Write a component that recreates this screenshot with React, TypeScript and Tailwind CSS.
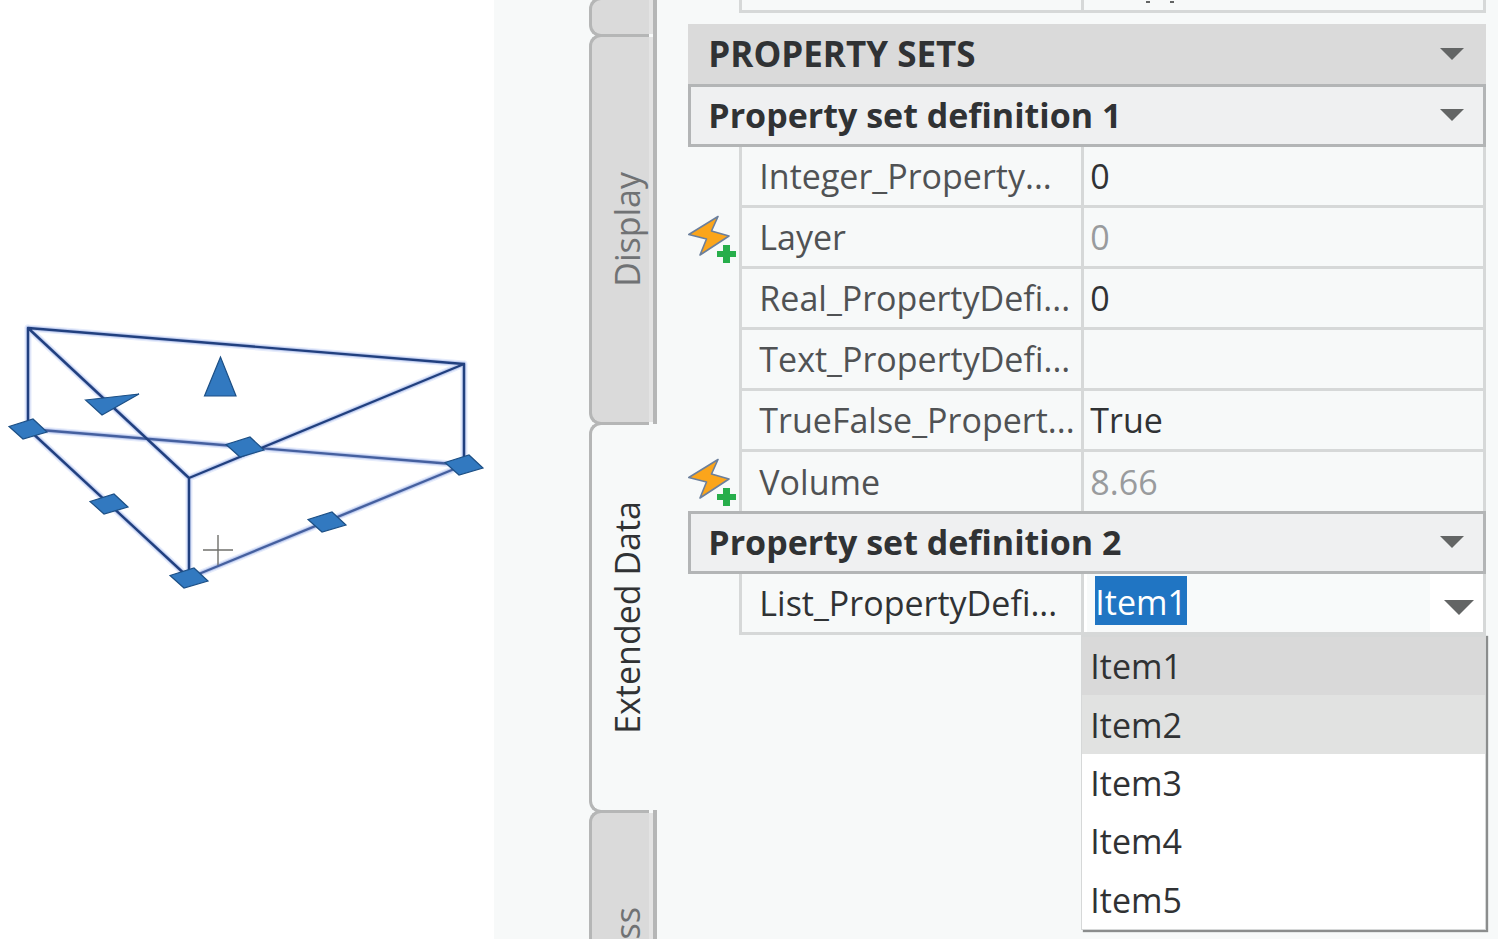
import React from 'react';

type Row = {
    name: string;
    value: string;
    auto?: boolean;
}

const firstSet: Row[] = [
    { name: 'Integer_Property...', value: '0' },
    { name: 'Layer', value: '0', auto: true },
    { name: 'Real_PropertyDefi...', value: '0' },
    { name: 'Text_PropertyDefi...', value: '' },
    { name: 'TrueFalse_Propert...', value: 'True' },
    { name: 'Volume', value: '8.66', auto: true },
]

const listItems = ['Item1', 'Item2', 'Item3', 'Item4', 'Item5']

const edges = 'M28 328L464 364M28 328L189 478L464 364M28 328V429M464 364V465M189 478V578M28 429L189 578'
const baseEdges = 'M28 429L464 465L189 578'
const grips = [[28, 429], [109, 504], [189, 578], [327, 522], [464, 465], [245, 447]]

function Arrow({ large }: { large?: boolean }) {
    return (
        <svg viewBox='0 0 24 12' className={large ? 'w-[30px] h-[15px]' : 'w-6 h-3'} aria-hidden='true'>
            <path d='M0 0H24L12 12Z' fill='#636565' />
        </svg>
    )
}

function AutoIcon() {
    return (
        <svg viewBox='0 0 48 48' className='block w-12 h-12' aria-hidden='true'>
            <path d='M30 1.5L0.8 19.5L18.5 24L12 40L41 21L23.5 16Z' fill='#fba51b' stroke='#6b7f9c' strokeWidth='1.6' strokeLinejoin='round' />
            <path d='M35 30H42V36H48V42H42V48H35V42H29V36H35Z' fill='#27ae4b' />
        </svg>
    )
}

function Canvas() {
    return (
        <section className='w-[33%] shrink-0 bg-white pt-[310px]' aria-label='Model view'>
            <svg viewBox='0 310 493 290' className='block w-[493px] h-[290px]'>
                <g fill='none' strokeLinecap='round' strokeLinejoin='round'>
                    <path d={edges + baseEdges} stroke='#e6ecfb' strokeWidth='7' />
                    <path d={edges + baseEdges} stroke='#c0cdf0' strokeWidth='4.4' />
                    <path d={baseEdges} stroke='#45609f' strokeWidth='2.4' />
                    <path d={edges} stroke='#21407f' strokeWidth='2.4' />
                </g>
                <g fill='#3279c0' stroke='#1c4f85' strokeWidth='1.2'>
                    {grips.map(([x, y]) => (
                        <path key={x} d='M-19 -2.5L5 -10L19 3L-5 10Z' transform={`translate(${x} ${y})`} />
                    ))}
                    <path d='M220.500 357L204.500 396H236Z' />
                    <path d='M85.500 400L139 394L102 415Z' />
                </g>
                <path d='M203 550H233M218 535V565' stroke='#70706c' strokeWidth='1.4' />
            </svg>
        </section>
    )
}

function Tab({ label, active, className }: { label?: string, active?: boolean, className: string }) {
    return (
        <div className={`flex shrink-0 -mb-[3px] ${className}`}>
            <button
                role='tab'
                aria-selected={!!active}
                aria-label={label ? undefined : 'Previous tab'}
                className={`flex flex-1 items-center rounded-l-[12px] border-y-[3px] border-l-[3px] border-[#b5b6b6] pl-[15px] ${active ? 'bg-[#f7f9f9] text-[#303234]' : 'bg-[#dadada] text-[#707274]'}`}>
                <span className='[writing-mode:vertical-rl] rotate-180 leading-[40px] whitespace-nowrap'>{label}</span>
            </button>
            <div className={`w-1 shrink-0 my-[3px] ${active ? '' : 'bg-[#e3e3e3]'}`} />
            <div className={`w-1 shrink-0 mb-[1px] ${active ? '' : 'bg-[#b5b6b6]'}`} />
        </div>
    )
}

function SetHeader({ title }: { title: string }) {
    return (
        <button className='flex w-full h-[63px] items-center justify-between border-[3px] border-[#b3b5b6] bg-[#eff0f1] pl-[17px] pr-[19px] pb-[2px] text-[34px] font-bold text-[#303234]'>
            {title}
            <Arrow />
        </button>
    )
}

function Columns() {
    return (
        <colgroup>
            <col className='w-[51px]' />
            <col className='w-[342px]' />
            <col />
        </colgroup>
    )
}

export default function App() {
    const [picked, setPicked] = React.useState('Item1')
    const [hovered, setHovered] = React.useState('Item2')
    const [open, setOpen] = React.useState(true)

    const onPick = (item: string) => {
        setPicked(item)
        setOpen(false)
    }

    const itemColor = (item: string) => {
        if (item === picked) return 'bg-[#d9d9d9]'
        return item === hovered ? 'bg-[#e1e2e1]' : 'bg-white'
    }

    return (
        <div className="flex h-screen overflow-hidden bg-[#f7f9f9] font-['Open_Sans',sans-serif] text-[34px] leading-[46px] text-[#303234]">
            <Canvas />
            <div className='flex min-w-0 flex-1 pl-[95px] pr-3'>
                <div role='tablist' aria-orientation='vertical' className='flex w-[68px] shrink-0 flex-col'>
                    <Tab className='h-[40px] -mt-[3px]' />
                    <Tab label='Display' className='h-[391px]' />
                    <Tab label='Extended Data' active className='h-[391px]' />
                    <Tab label='ss' className='h-[227px]' />
                </div>
                <main className='ml-[31px] min-w-0 flex-1'>
                    {/* tail of the section scrolled above */}
                    <div className='ml-[51px] flex h-[13px] border-x-[3px] border-b-[3px] border-[#d6d8d8]'>
                        <div className='w-[342px] border-r-[3px] border-[#d6d8d8]' />
                        <div className='ml-[62px] mt-[1px] h-[2px] w-1 bg-[#636565]' />
                        <div className='ml-5 mt-[1px] h-[2px] w-1 bg-[#636565]' />
                    </div>
                    <button className='mt-[11px] flex w-full h-[60px] items-center justify-between bg-[#dadada] pl-5 pr-[22px] text-[35px] font-bold'>
                        PROPERTY SETS
                        <Arrow />
                    </button>
                    <SetHeader title='Property set definition 1' />
                    <table className='w-full table-fixed border-separate border-spacing-0'>
                        <Columns />
                        <tbody>
                            {firstSet.map((row, idx) => {
                                const last = idx === firstSet.length - 1
                                const line = last ? 'h-[59px] border-b-0' : 'h-[61px] border-b-[3px]'
                                return (
                                    <tr key={row.name}>
                                        <td className='p-0'>{row.auto && <AutoIcon />}</td>
                                        <th scope='row' className={`border-l-[3px] border-[#d6d8d8] p-0 pl-[17px] text-left font-normal text-[#505254] whitespace-nowrap ${line}`}>
                                            <label htmlFor={row.name}>{row.name}</label>
                                        </th>
                                        <td className={`border-x-[3px] border-[#d6d8d8] p-0 pl-[6px] ${line}`}>
                                            <input
                                                id={row.name}
                                                defaultValue={row.value}
                                                readOnly={row.auto}
                                                className={`block w-full h-[46px] bg-transparent outline-none ${row.auto ? 'text-[#999b9d]' : 'text-[#303234]'}`} />
                                        </td>
                                    </tr>
                                )
                            })}
                        </tbody>
                    </table>
                    <SetHeader title='Property set definition 2' />
                    <table className='w-full table-fixed border-separate border-spacing-0'>
                        <Columns />
                        <tbody>
                            <tr>
                                <td className='p-0' />
                                <th scope='row' className='h-[61px] border-l-[3px] border-b-[3px] border-[#d6d8d8] p-0 pl-[17px] text-left font-normal whitespace-nowrap'>
                                    <label htmlFor='list'>List_PropertyDefi...</label>
                                </th>
                                <td className='relative h-[61px] border-x-[3px] border-b-[3px] border-[#d6d8d8] p-0'>
                                    <div className='flex h-[58px] items-start justify-between border-l-[3px] border-white bg-[#f8fafa]'>
                                        <input
                                            id='list'
                                            role='combobox'
                                            aria-expanded={open}
                                            aria-controls='items'
                                            value={picked}
                                            onChange={(e) => setPicked(e.target.value)}
                                            className='ml-2 mt-[2px] w-[92px] h-[49px] bg-[#2075c3] pt-[2px] text-white outline-none' />
                                        <button
                                            aria-label='Open list'
                                            onClick={() => setOpen(!open)}
                                            className='flex h-full w-[53px] items-center justify-center bg-white pt-2 pl-1'>
                                            <Arrow large />
                                        </button>
                                    </div>
                                    {open &&
                                        <ul
                                            id='items'
                                            role='listbox'
                                            className='absolute top-[60px] -left-[3px] -right-[3px] grid h-[296px] grid-rows-5 border border-t-[3px] border-[#d6d8d8] bg-white shadow-[2px_2px_1px_#8b8d8d]'>
                                            {listItems.map((item) => (
                                                <li key={item} role='option' aria-selected={item === picked}>
                                                    <button
                                                        onMouseEnter={() => setHovered(item)}
                                                        onClick={() => onPick(item)}
                                                        className={`block h-full w-full pl-2 text-left ${itemColor(item)}`}>
                                                        {item}
                                                    </button>
                                                </li>
                                            ))}
                                        </ul>
                                    }
                                </td>
                            </tr>
                        </tbody>
                    </table>
                </main>
            </div>
        </div>
    )
}
